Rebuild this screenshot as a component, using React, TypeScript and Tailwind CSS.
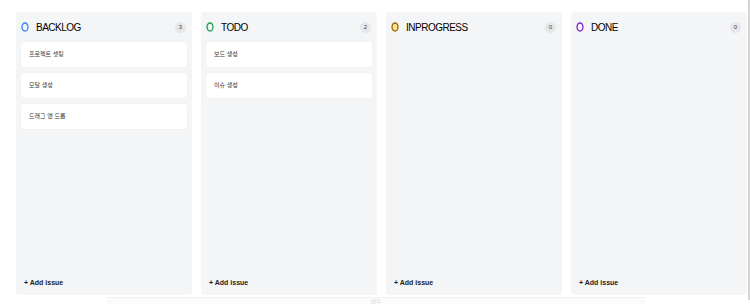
import React from "react";

type Column = {
  title: string;
  ring: string;
  fill: string;
  issues: string[];
};

const columns: Column[] = [
  { title: "BACKLOG", ring: "#3b82f6", fill: "none", issues: ["프로젝트 셋팅", "모달 생성", "드래그 앤 드롭"] },
  { title: "TODO", ring: "#16a34a", fill: "none", issues: ["보드 생성", "이슈 생성"] },
  { title: "INPROGRESS", ring: "#a16207", fill: "#fde68a", issues: [] },
  { title: "DONE", ring: "#7e22ce", fill: "none", issues: [] },
];

function StatusIcon({ ring, fill }: { ring: string; fill: string }) {
  return (
    <svg width="8" height="10" viewBox="0 0 8 10" className="shrink-0">
      <ellipse cx="4" cy="5" rx="3" ry="4" fill={fill} stroke={ring} strokeWidth="1.3" />
    </svg>
  );
}

function BoardColumn({ col }: { col: Column }) {
  return (
    <div className="w-[176px] h-[283px] shrink-0 rounded-[4px] bg-[#f4f5f7] px-[5px] flex flex-col">
      <div className="h-[30px] flex items-center gap-[7px] pl-[-1px] pr-[1px]">
        <StatusIcon ring={col.ring} fill={col.fill} />
        <span className="text-[10px] text-black tracking-[-0.5px]">{col.title}</span>
        <span className="ml-auto w-[11px] h-[11px] rounded-full bg-[#e5e7eb] text-[6px] text-[#444] flex items-center justify-center">
          {col.issues.length}
        </span>
      </div>
      <div className="flex flex-col gap-[6px]">
        {col.issues.map((issue) => (
          <div
            key={issue}
            className="h-[25px] bg-white rounded-[3px] shadow-[0_0_1px_rgba(0,0,0,0.08)] flex items-center pl-[8px] text-[6px] text-[#333]"
          >
            {issue}
          </div>
        ))}
      </div>
      <div className="flex-1" />
      <div className="h-[24px] pl-[3px] flex items-center text-[7px] font-bold text-[#222]">+ Add issue</div>
    </div>
  );
}

export default function App() {
  return (
    <div
      className="relative w-[750px] h-[304px] bg-white overflow-hidden"
      style={{ fontFamily: '"Liberation Sans", Arial, "Noto Sans CJK KR", sans-serif' }}
    >
      <div className="flex gap-[9px] pl-[16px] pt-[12px]">
        {columns.map((col) => (
          <BoardColumn key={col.title} col={col} />
        ))}
      </div>
      <div className="ml-[107px] mt-[2px] w-[538px] h-[8px] border-t border-[#eef0f2] bg-[#fbfbfc] flex justify-center">
        <span className="text-[6px] text-[#ddd] leading-[8px]">메모</span>
      </div>
      <div className="absolute right-0 top-0 w-[2px] h-[300px] bg-[#d4d4d4]" />
    </div>
  );
}
